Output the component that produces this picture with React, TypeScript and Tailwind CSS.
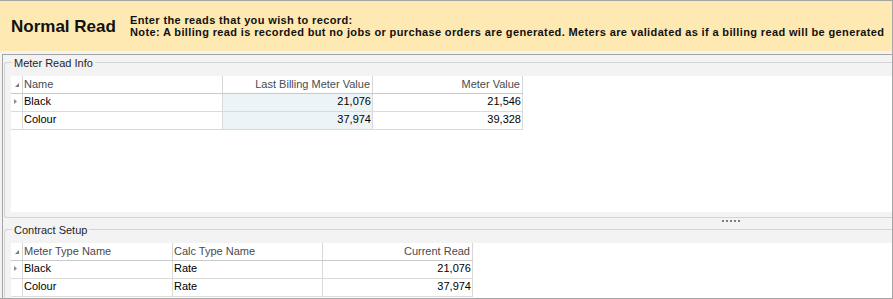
import React from "react";

type Col = { title: string; w: string; align: "left" | "right"; shaded?: boolean };

function HeaderTri() {
  return (
    <svg width="4" height="4" viewBox="0 0 4 4" className="block">
      <polygon points="4,0 4,4 0,4" fill="#7a7a7a" />
    </svg>
  );
}

function RowTri() {
  return (
    <svg width="3" height="5" viewBox="0 0 3 5" className="block">
      <polygon points="0,0 3,2.5 0,5" fill="#8a8a8a" />
    </svg>
  );
}

function Grid({ cols, rows, h }: { cols: Col[]; rows: string[][]; h: string }) {
  return (
    <div className={`bg-white ml-[6px] mt-[6px] ${h} text-[11px]`}>
      <div className="w-fit flex flex-col">
        <div className="flex h-[18px] border-b border-[#c9c9c9]">
          <div className="w-[12px] shrink-0 border-r border-[#d6d6d6] pl-[4px] pt-[7px]">
            <HeaderTri />
          </div>
          {cols.map((c) => (
            <div
              key={c.title}
              className={`${c.w} shrink-0 border-r border-[#d6d6d6] leading-[17px] text-[#474b52] whitespace-nowrap ${
                c.align === "right" ? "text-right pr-[2px]" : "pl-[1px]"
              }`}
            >
              {c.title}
            </div>
          ))}
        </div>
        {rows.map((r, i) => (
          <div key={i} className="flex h-[18px] border-b border-[#dadada]">
            <div className="w-[12px] shrink-0 border-r border-[#dadada] pl-[3px] pt-[5px]">
              {i === 0 && <RowTri />}
            </div>
            {r.map((v, j) => (
              <div
                key={j}
                className={`${cols[j].w} shrink-0 border-r border-[#dadada] leading-[15px] text-black whitespace-nowrap ${
                  cols[j].shaded ? "bg-[#edf4f7]" : ""
                } ${cols[j].align === "right" ? "text-right pr-[1px]" : "pl-[1px]"}`}
              >
                {v}
              </div>
            ))}
          </div>
        ))}
      </div>
    </div>
  );
}

function GroupTitle({ children }: { children: React.ReactNode }) {
  return (
    <div className="-mt-[7px] ml-[7px] w-fit px-[2px] bg-[#f3f3f3] leading-[14px] text-[11px] text-[#1f1f1f]">
      {children}
    </div>
  );
}

export default function App() {
  const meterCols: Col[] = [
    { title: "Name", w: "w-[200px]", align: "left" },
    { title: "Last Billing Meter Value", w: "w-[150px]", align: "right", shaded: true },
    { title: "Meter Value", w: "w-[150px]", align: "right" },
  ];
  const contractCols: Col[] = [
    { title: "Meter Type Name", w: "w-[150px]", align: "left" },
    { title: "Calc Type Name", w: "w-[150px]", align: "left" },
    { title: "Current Read", w: "w-[150px]", align: "right" },
  ];

  return (
    <div className="w-[893px] h-[299px] overflow-hidden bg-[#f3f3f3] flex flex-col border-t border-r border-b border-[#a5a5a5] font-['Liberation_Sans',Arial,sans-serif]">
      {/* Header */}
      <div className="h-[50px] shrink-0 bg-[#ffe9b3] flex items-start pl-[11px] text-[#111]">
        <div className="w-[119px] shrink-0 mt-[17px] text-[17px] leading-[17px] font-bold whitespace-nowrap">
          Normal Read
        </div>
        <div className="mt-[13px] text-[11px] leading-[12px] font-bold tracking-[0.37px] whitespace-nowrap">
          <div>Enter the reads that you wish to record:</div>
          <div>
            Note: A billing read is recorded but no jobs or purchase orders are generated. Meters are validated as if a
            billing read will be generated
          </div>
        </div>
      </div>

      {/* Body */}
      <div className="mt-[3px] ml-[2px] flex-1 min-w-0 overflow-hidden border-t border-l border-[#a5a5a5] bg-[#f3f3f3] flex flex-col">
        {/* Meter Read Info */}
        <div className="mt-[7px] ml-[1px] w-[1000px] shrink-0 border-l border-t border-b border-[#d5d5d5] rounded-l-[3px] pb-[5px]">
          <GroupTitle>Meter Read Info</GroupTitle>
          <Grid
            cols={meterCols}
            rows={[
              ["Black", "21,076", "21,546"],
              ["Colour", "37,974", "39,328"],
            ]}
            h="h-[136px]"
          />
        </div>

        {/* Splitter */}
        <div className="h-[11px] shrink-0 flex items-start">
          <div className="mt-[2px] ml-[719px] flex gap-[2px]">
            <div className="w-[2px] h-[2px] bg-[#7d7d7d]" />
            <div className="w-[2px] h-[2px] bg-[#7d7d7d]" />
            <div className="w-[2px] h-[2px] bg-[#7d7d7d]" />
            <div className="w-[2px] h-[2px] bg-[#7d7d7d]" />
            <div className="w-[2px] h-[2px] bg-[#7d7d7d]" />
          </div>
        </div>

        {/* Contract Setup */}
        <div className="ml-[1px] w-[1000px] shrink-0 border-l border-t border-[#d5d5d5] rounded-tl-[3px]">
          <GroupTitle>Contract Setup</GroupTitle>
          <Grid
            cols={contractCols}
            rows={[
              ["Black", "Rate", "21,076"],
              ["Colour", "Rate", "37,974"],
            ]}
            h="h-[70px]"
          />
        </div>
      </div>
    </div>
  );
}
